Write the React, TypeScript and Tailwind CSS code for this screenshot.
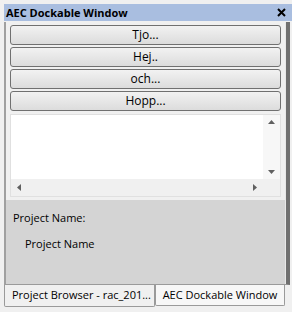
import React from "react";

const buttons = ["Tjo...", "Hej..", "och...", "Hopp..."];

const App: React.FC = () => {
  return (
    <div
      className="w-[292px] h-[312px] bg-[#f0f0f0] flex flex-col pl-[4px] pt-[4px] text-[11px] text-black"
      style={{ fontFamily: '"Open Sans", "Noto Sans", sans-serif' }}
    >
      <div className="h-[17px] bg-[#a9bee0] flex items-center justify-between pl-[2px] pr-[6px]">
        <span className="font-bold text-[11px] leading-none">AEC Dockable Window</span>
        <svg width="9" height="9" viewBox="0 0 9 9">
          <path d="M1 1 L8 8 M8 1 L1 8" stroke="#000" strokeWidth="2" />
        </svg>
      </div>
      <div className="flex-1 flex flex-col border-l-[2px] border-r-[4px] border-l-[#a0a0a0] border-r-[#707070] border-b border-b-[#9a9a9a] mt-[1px] mr-[2px] bg-[#f0f0f0]">
        <div className="flex-1 flex flex-col border-r border-[#e8e8e8]">
          <div className="flex flex-col gap-[2px] px-[4px] pt-[3px]">
            {buttons.map((b) => (
              <div
                key={b}
                className="h-[20px] flex items-center justify-center rounded-[3px] border border-[#707070] bg-gradient-to-b from-[#f2f2f2] to-[#dcdcdc] leading-none text-[12px]"
              >
                {b}
              </div>
            ))}
          </div>
          <div className="mx-[4px] mt-[3px] h-[83px] bg-white border border-[#e0e0e0] flex flex-col">
            <div className="flex-1 flex">
              <div className="flex-1" />
              <div className="w-[17px] bg-[#f7f7f7] flex flex-col items-center justify-between py-[5px]">
                <svg width="7" height="4" viewBox="0 0 7 4"><path d="M0 4 L3.5 0 L7 4 Z" fill="#606060" /></svg>
                <svg width="7" height="4" viewBox="0 0 7 4"><path d="M0 0 L3.5 4 L7 0 Z" fill="#606060" /></svg>
              </div>
            </div>
            <div className="h-[17px] flex">
              <div className="flex-1 bg-[#f0f0f0] flex items-center justify-between px-[6px]">
                <svg width="4" height="7" viewBox="0 0 4 7"><path d="M4 0 L0 3.5 L4 7 Z" fill="#606060" /></svg>
                <svg width="4" height="7" viewBox="0 0 4 7"><path d="M0 0 L4 3.5 L0 7 Z" fill="#606060" /></svg>
              </div>
              <div className="w-[17px] bg-[#f0f0f0]" />
            </div>
          </div>
          <div className="flex-1 bg-[#d4d4d4] mt-[3px] flex flex-col pl-[7px] pt-[12px]">
            <span className="leading-none">Project Name:</span>
            <span className="leading-none pl-[12px] mt-[15px]">Project Name</span>
          </div>
        </div>
      </div>
      <div className="h-[27px] flex items-start">
        <div className="h-[22px] w-[151px] bg-[#f0f0f0] border-x border-b border-[#9a9a9a] rounded-b-[2px] flex items-center pl-[7px] whitespace-nowrap">
          Project Browser - rac_201...
        </div>
        <div className="h-[21px] w-[130px] bg-[#f7f7f7] border-x border-b border-[#9a9a9a] rounded-b-[2px] flex items-center justify-center whitespace-nowrap">
          AEC Dockable Window
        </div>
      </div>
    </div>
  );
};

export default App;
